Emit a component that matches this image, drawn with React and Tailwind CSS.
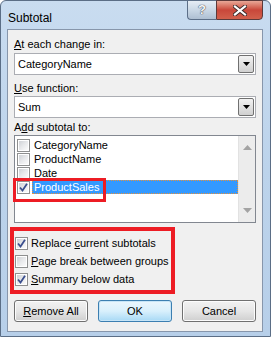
import React from 'react';

const font = { fontFamily: '"Liberation Sans", Arial, sans-serif' };

function Check({ checked }) {
  return (
    <div className="w-[13px] h-[13px] shrink-0 border border-[#8e8f8f] bg-white p-[1px]">
      <div className="w-full h-full bg-gradient-to-br from-[#cfd2d6] via-[#e8e9eb] to-[#fbfbfb] flex items-center justify-center">
        {checked && (
          <svg width="9" height="9" viewBox="0 0 9 9">
            <path d="M1 4.5 L3.5 7.5 L8 0.8" fill="none" stroke="#3b4f8e" strokeWidth="1.8" />
          </svg>
        )}
      </div>
    </div>
  );
}

function Combo({ value }) {
  return (
    <div className="h-[22px] bg-white border border-[#abadb3] flex items-center pl-[3px] pr-[1px]">
      <span className="flex-1 text-black">{value}</span>
      <div className="w-[16px] h-[18px] rounded-[2px] border border-[#707070] bg-gradient-to-b from-[#f2f2f2] to-[#d0d0d0] flex items-center justify-center">
        <svg width="7" height="4" viewBox="0 0 7 4">
          <path d="M0 0 H7 L3.5 4 Z" fill="#000" />
        </svg>
      </div>
    </div>
  );
}

function Btn({ children, primary }) {
  return (
    <div
      className={`w-[74px] h-[22px] rounded-[3px] border flex items-center justify-center text-black ${
        primary
          ? 'border-[#3c7fb1] bg-gradient-to-b from-[#eaf6fd] via-[#d9f0fc] to-[#a7d9f5] shadow-[inset_0_0_0_1px_#c7e5f7]'
          : 'border-[#707070] bg-gradient-to-b from-[#f2f2f2] via-[#e6e6e6] to-[#cfcfcf] shadow-[inset_0_0_0_1px_#fcfcfc]'
      }`}
    >
      {children}
    </div>
  );
}

export default function App() {
  const items = [
    { label: 'CategoryName', checked: false },
    { label: 'ProductName', checked: false },
    { label: 'Date', checked: false },
    { label: 'ProductSales', checked: true, selected: true },
  ];

  return (
    <div style={font} className="w-[271px] h-[337px] overflow-hidden bg-white">
      <div className="w-[271px] h-[337px] rounded-t-[6px] border border-[#5b6e86] bg-gradient-to-b from-[#c9dcf0] via-[#bcd3eb] to-[#b7cfe9] flex flex-col">
        {/* Title bar */}
        <div className="h-[28px] flex items-start justify-between shrink-0">
          <div className="pl-[7px] pt-[8px] text-[12px] text-black">Subtotal</div>
          <div className="flex mr-[7px] -mt-[1px]">
            <div className="w-[29px] h-[20px] rounded-bl-[4px] border border-[#5c6f88] border-r-0 bg-gradient-to-b from-[#e6edf5] via-[#cad8e6] to-[#aebfd2] flex items-center justify-center">
              <span className="text-[13px] font-bold text-[#f8f8f8] [text-shadow:0_0_1px_#334,0_0_1px_#334]">?</span>
            </div>
            <div className="w-[47px] h-[20px] rounded-br-[4px] border border-[#5c3a3a] bg-gradient-to-b from-[#e8a797] via-[#c9473a] to-[#d2604c] flex items-center justify-center">
              <svg width="14" height="11" viewBox="0 0 14 11">
                <path d="M2 1.5 L12 9.5 M12 1.5 L2 9.5" stroke="#3a2a2a" strokeWidth="4" strokeLinecap="square" />
                <path d="M2 1.5 L12 9.5 M12 1.5 L2 9.5" stroke="#ffffff" strokeWidth="2.2" strokeLinecap="square" />
              </svg>
            </div>
          </div>
        </div>

        {/* Client area */}
        <div className="ml-[6px] mr-[7px] h-[303px] border border-[#8796ab] bg-[#f0f0f0] px-[6px] text-[11px] text-black whitespace-nowrap">
          <div className="mt-[6px] leading-[16px]">
            <span className="underline">A</span>t each change in:
          </div>
          <div className="mt-[1px]">
            <Combo value="CategoryName" />
          </div>
          <div className="mt-[5px] leading-[16px]">
            <span className="underline">U</span>se function:
          </div>
          <Combo value="Sum" />
          <div className="mt-[2px] leading-[15px]">
            A<span className="underline">d</span>d subtotal to:
          </div>

          {/* List box */}
          <div className="relative h-[88px] bg-white border border-[#828790] flex">
            <div className="flex-1 pt-[2px] pl-[2px]">
              {items.map((it) => (
                <div key={it.label} className="h-[14px] flex items-center gap-[2px]">
                  <Check checked={it.checked} />
                  <div
                    className={`flex-1 h-[14px] leading-[12px] pl-[1px] ${
                      it.selected ? 'bg-[#3399ff] text-white border border-dotted border-[#e8923a]' : 'border border-transparent'
                    }`}
                  >
                    {it.label}
                  </div>
                </div>
              ))}
            </div>
            <div className="w-[17px] bg-[#ececec] border-l border-[#e2e2e2] flex flex-col items-center justify-between py-[9px]">
              <svg width="9" height="5" viewBox="0 0 9 5"><path d="M0 5 L4.5 0 L9 5 Z" fill="#a3a3a3" /></svg>
              <svg width="9" height="5" viewBox="0 0 9 5"><path d="M0 0 L9 0 L4.5 5 Z" fill="#a3a3a3" /></svg>
            </div>
            <div className="absolute left-[-2px] top-[42px] w-[93px] h-[24px] border-[3px] border-[#ed1c24]" />
          </div>

          {/* Options */}
          <div className="mt-[4px] -ml-[4px] w-[165px] border-[4px] border-[#ed1c24] pt-[3px] pb-[2px] pl-[1px]">
            <div className="h-[18px] flex items-center gap-[3px]">
              <Check checked />
              <span>Replace <span className="underline">c</span>urrent subtotals</span>
            </div>
            <div className="h-[18px] flex items-center gap-[3px]">
              <Check />
              <span><span className="underline">P</span>age break between groups</span>
            </div>
            <div className="h-[18px] flex items-center gap-[3px]">
              <Check checked />
              <span><span className="underline">S</span>ummary below data</span>
            </div>
          </div>

          {/* Buttons */}
          <div className="mt-[6px] flex justify-between">
            <Btn><span><span className="underline">R</span>emove All</span></Btn>
            <Btn primary>OK</Btn>
            <Btn>Cancel</Btn>
          </div>
        </div>
      </div>
    </div>
  );
}
